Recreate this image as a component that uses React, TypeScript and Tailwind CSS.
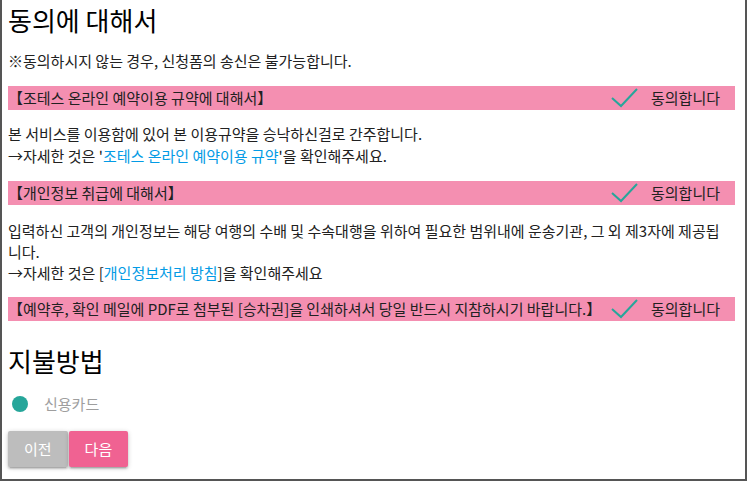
const font = "font-['Noto_Sans_CJK_KR','Noto_Sans',sans-serif]";

function Check() {
  return (
    <svg width="28" height="22" viewBox="0 0 28 22" fill="none">
      <polyline points="1,11 10,19 26,2" stroke="#26a69a" strokeWidth="2" />
    </svg>
  );
}

function AgreeBar({ title }: { title: string }) {
  return (
    <div className="flex h-6 items-center justify-between bg-[#f48fb1] text-[15px] leading-6 text-[#212121]">
      <span className="whitespace-nowrap">{title}</span>
      <label className="flex items-center gap-[12px] pr-[15px]">
        <Check />
        <span>동의합니다</span>
      </label>
    </div>
  );
}

export default function App() {
  return (
    <div
      className={`${font} h-[481px] w-[747px] overflow-hidden border-2 border-t-0 border-[#555] bg-white pl-[6px] pr-[10px] pt-[3px] text-[#212121]`}
    >
      <h2 className="text-[26px] leading-[34px] text-black">동의에 대해서</h2>
      <p className="mt-[13px] text-[15px] leading-[22px]">※동의하시지 않는 경우, 신청폼의 송신은 불가능합니다.</p>

      <div className="mt-[14px]">
        <AgreeBar title="【조테스 온라인 예약이용 규약에 대해서】" />
      </div>
      <p className="mt-[13px] text-[15px] leading-[22px]">
        본 서비스를 이용함에 있어 본 이용규약을 승낙하신걸로 간주합니다.
        <br />
        →자세한 것은 '<a className="text-[#039be5]">조테스 온라인 예약이용 규약</a>'을 확인해주세요.
      </p>

      <div className="mt-[14px]">
        <AgreeBar title="【개인정보 취급에 대해서】" />
      </div>
      <p className="mt-[15px] text-[15px] leading-[21px]">
        <span className="whitespace-nowrap">
          입력하신 고객의 개인정보는 해당 여행의 수배 및 수속대행을 위하여 필요한 범위내에 운송기관, 그 외 제3자에 제공됩
        </span>
        <br />
        니다.
        <br />
        →자세한 것은 [<a className="text-[#039be5]">개인정보처리 방침</a>]을 확인해주세요
      </p>

      <div className="mt-[14px]">
        <AgreeBar title="【예약후, 확인 메일에 PDF로 첨부된 [승차권]을 인쇄하셔서 당일 반드시 지참하시기 바랍니다.】" />
      </div>

      <h2 className="mt-[23px] text-[26px] leading-[34px] text-black">지불방법</h2>
      <label className="mt-[16px] flex h-5 items-center">
        <span className="ml-[4px] h-4 w-4 rounded-full bg-[#26a69a]" />
        <span className="ml-[16px] text-[15px] text-[#9e9e9e]">신용카드</span>
      </label>

      <div className="mt-[17px] flex gap-px">
        <button className="h-9 rounded-[2px] bg-[#bdbdbd] px-4 text-[15px] text-white shadow-[0_2px_2px_0_rgba(0,0,0,0.14),0_3px_1px_-2px_rgba(0,0,0,0.12),0_1px_5px_0_rgba(0,0,0,0.2)]">
          이전
        </button>
        <button className="h-9 rounded-[2px] bg-[#f06292] px-4 text-[15px] text-white shadow-[0_2px_2px_0_rgba(0,0,0,0.14),0_3px_1px_-2px_rgba(0,0,0,0.12),0_1px_5px_0_rgba(0,0,0,0.2)]">
          다음
        </button>
      </div>
    </div>
  );
}
